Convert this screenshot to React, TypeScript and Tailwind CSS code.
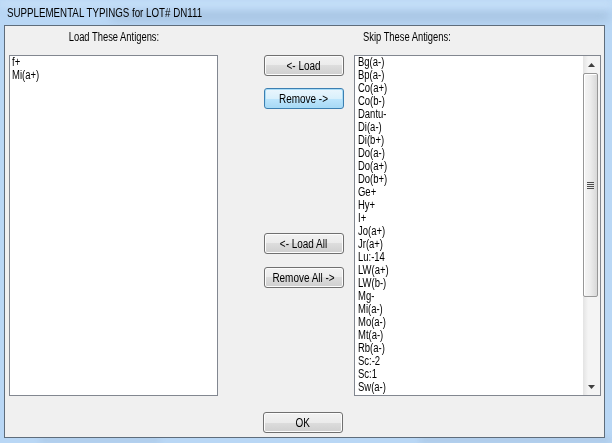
import React from "react";

const skip = [
  "Bg(a-)", "Bp(a-)", "Co(a+)", "Co(b-)", "Dantu-", "Di(a-)", "Di(b+)", "Do(a-)", "Do(a+)", "Do(b+)",
  "Ge+", "Hy+", "I+", "Jo(a+)", "Jr(a+)", "Lu:-14", "LW(a+)", "LW(b-)", "Mg-", "Mi(a-)", "Mo(a-)",
  "Mt(a-)", "Rb(a-)", "Sc:-2", "Sc:1", "Sw(a-)",
];
const load = ["f+", "Mi(a+)"];

function Btn({ label, focused, className = "" }: { label: string; focused?: boolean; className?: string }) {
  return (
    <div
      className={
        "w-[80px] h-[21px] rounded-[3px] border flex items-center justify-center text-[12px] leading-none text-black " +
        (focused
          ? "border-[#3c7fb1] shadow-[inset_0_0_0_1px_#a8dcf7] bg-[linear-gradient(#eaf6fd_0%,#d9f0fc_50%,#bee6fd_50%,#a7d9f5_100%)] "
          : "border-[#707070] shadow-[inset_0_0_0_1px_#fcfcfc] bg-[linear-gradient(#f2f2f2_0%,#ebebeb_50%,#dddddd_50%,#cfcfcf_100%)] ") +
        className
      }
    >
      <span className="inline-block whitespace-nowrap scale-x-[0.83] origin-center">{label}</span>
    </div>
  );
}

function Arrow({ up }: { up?: boolean }) {
  return (
    <svg width="7" height="4" viewBox="0 0 7 4">
      {up ? <path d="M0 4 L3.5 0 L7 4 Z" fill="#404040" /> : <path d="M0 0 L3.5 4 L7 0 Z" fill="#404040" />}
    </svg>
  );
}

function Item({ t }: { t: string }) {
  return (
    <div className="h-[13px] leading-[13px]">
      <span className="inline-block whitespace-nowrap scale-x-[0.79] origin-left">{t}</span>
    </div>
  );
}

export default function App() {
  return (
    <div
      className="relative w-[612px] h-[443px] overflow-hidden bg-[#b9d7f5] text-black"
      style={{ fontFamily: '"Liberation Sans", Arial, sans-serif' }}
    >
      {/* blurred aero glass decoration */}
      <div className="absolute left-[110px] top-[11px] w-[500px] h-[10px] rounded-full bg-[#9fbbd8] blur-[5px] opacity-70" />
      <div className="absolute left-[0px] top-[0px] w-[612px] h-[8px] bg-[#c4def7] blur-[3px]" />
      <div className="absolute left-[420px] top-[436px] w-[190px] h-[8px] bg-[#a7c3e0] blur-[3px] opacity-60" />
      <div className="absolute left-[40px] top-[436px] w-[120px] h-[8px] bg-[#a7c3e0] blur-[3px] opacity-50" />

      {/* title bar */}
      <div className="relative h-[25px] pl-[7px] flex items-center text-[13px]">
        <span className="inline-block whitespace-nowrap scale-x-[0.75] origin-left">SUPPLEMENTAL TYPINGS for LOT# DN111</span>
      </div>

      {/* client area */}
      <div className="relative ml-[4px] w-[601px] h-[413px] border border-[#5f6d7b] bg-[#f0f0f0] text-[12px]">
        <div className="flex pl-[4px]">
          {/* left column */}
          <div className="flex flex-col w-[209px]">
            <div className="h-[29px] pt-[5px] text-center leading-[13px]">
              <span className="inline-block whitespace-nowrap scale-x-[0.78] origin-center">Load These Antigens:</span>
            </div>
            <div className="h-[341px] border border-[#828790] bg-white pl-[2px]">
              {load.map((t) => (
                <Item key={t} t={t} />
              ))}
            </div>
          </div>

          {/* buttons column */}
          <div className="flex flex-col ml-[46px] w-[80px] pt-[29px]">
            <Btn label="<- Load" />
            <Btn label="Remove ->" focused className="mt-[12px]" />
            <Btn label="<- Load All" className="mt-[124px]" />
            <Btn label="Remove All ->" className="mt-[13px]" />
          </div>

          {/* right column */}
          <div className="flex flex-col ml-[10px] w-[247px]">
            <div className="h-[29px] pt-[5px] pl-[9px] leading-[13px]">
              <span className="inline-block whitespace-nowrap scale-x-[0.78] origin-left">Skip These Antigens:</span>
            </div>
            <div className="h-[341px] border border-[#828790] bg-white flex">
              <div className="flex-1 pl-[3px] overflow-hidden">
                {skip.map((t) => (
                  <Item key={t} t={t} />
                ))}
              </div>
              <div className="w-[17px] flex flex-col bg-[linear-gradient(90deg,#e3e3e3,#f4f4f4_30%,#f4f4f4)]">
                <div className="h-[17px] flex items-center justify-center">
                  <Arrow up />
                </div>
                <div className="flex-1 relative">
                  <div className="absolute left-[0px] top-[0px] w-[15px] h-[224px] rounded-[2px] border border-[#979797] bg-[linear-gradient(90deg,#f5f5f5,#ececec_50%,#d8d8d8)] flex flex-col items-center justify-center gap-[1px] shadow-[inset_1px_1px_0_#ffffff]">
                    <div className="w-[7px] h-[1px] bg-[#4d4d4d]" />
                    <div className="w-[7px] h-[1px] bg-[#4d4d4d]" />
                    <div className="w-[7px] h-[1px] bg-[#4d4d4d]" />
                    <div className="w-[7px] h-[1px] bg-[#4d4d4d]" />
                  </div>
                </div>
                <div className="h-[17px] flex items-center justify-center">
                  <Arrow />
                </div>
              </div>
            </div>
          </div>
        </div>

        {/* OK */}
        <div className="pl-[258px] mt-[16px]">
          <Btn label="OK" />
        </div>
      </div>
    </div>
  );
}
